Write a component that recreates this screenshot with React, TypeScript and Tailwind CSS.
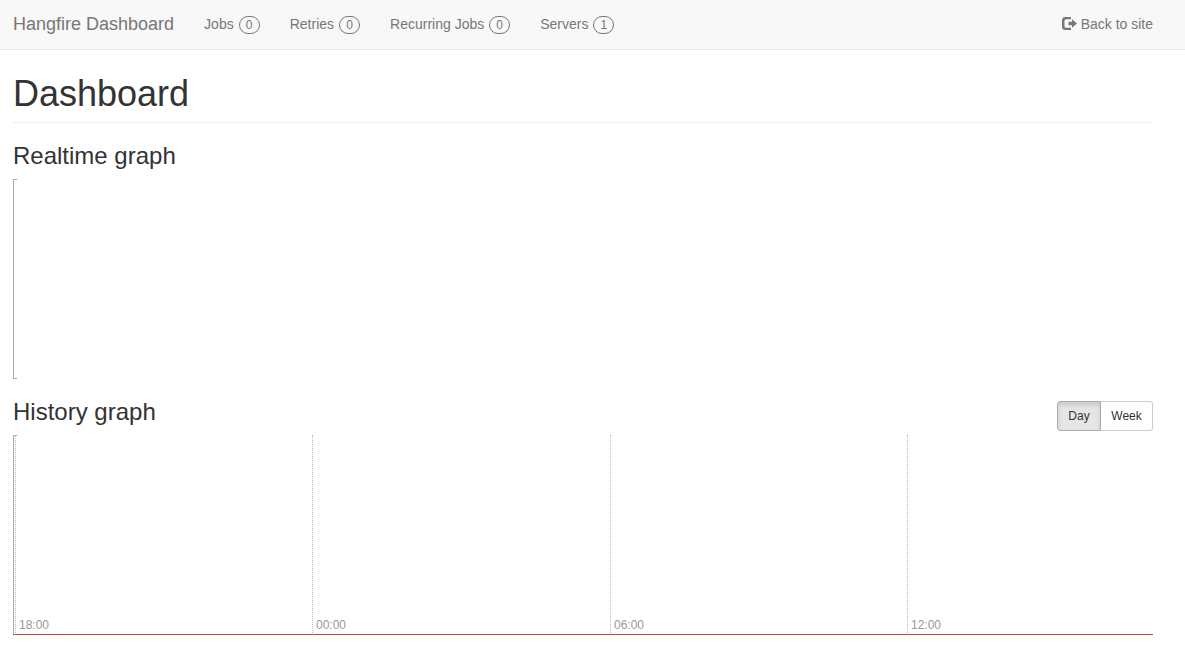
import { useState } from "react";

const navItems = [
  { label: "Jobs", count: 0 },
  { label: "Retries", count: 0 },
  { label: "Recurring Jobs", count: 0 },
  { label: "Servers", count: 1 },
];

const hours = ["18:00", "00:00", "06:00", "12:00"];

const periods = ["Day", "Week"];

function LogOutIcon() {
  return (
    <svg viewBox="0 0 15 14" className="mt-[3px] h-[14px] w-[15px]" fill="currentColor" aria-hidden="true">
      <path d="M9 0H3.500Q0 0 0 3.500v6Q0 13 3.500 13H9v-2.300H4Q2.500 10.700 2.500 9.200V3.800Q2.500 2.300 4 2.300H9z" />
      <path d="M10 2.300 15 6.500 10 10.700V8.200H6.500V4.800H10z" />
    </svg>
  );
}

// y axis line with a short tick at both ends
function Axis() {
  return <div className="h-full w-1 border-y border-l border-[#aaa]" />;
}

function Navbar() {
  return (
    <nav className="flex items-start justify-between border-b border-[#e7e7e7] bg-[#f8f8f8] pt-[14px] pr-8 pb-[15px] pl-[13px] text-[#777]">
      <div className="flex items-start gap-[30px]">
        <a href="#" className="text-lg leading-5">
          Hangfire Dashboard
        </a>
        {navItems.map((item) => (
          <a key={item.label} href="#" className="flex items-start gap-[5px]">
            {item.label}
            <span className="mt-[2px] min-w-[21px] rounded-[10px] border border-[#777] px-[6px] py-[2px] text-center text-xs leading-3">
              {item.count}
            </span>
          </a>
        ))}
      </div>

      <a href="#" className="flex items-start gap-1">
        <LogOutIcon />
        Back to site
      </a>
    </nav>
  );
}

export default function App() {
  const [period, setPeriod] = useState("Day");

  return (
    <div className="bg-white font-['Liberation_Sans',Arial,sans-serif] text-sm leading-5 text-[#333]">
      <Navbar />

      <main className="pt-6 pr-8 pb-7 pl-[13px]">
        <h1 className="border-b border-[#eee] pb-2 text-4xl leading-10">Dashboard</h1>

        <h3 className="mt-5 mb-[10px] text-2xl leading-[26px]">Realtime graph</h3>
        <div className="h-[200px]">
          <Axis />
        </div>

        <div className="mt-5 mb-1 flex items-start justify-between">
          <h3 className="text-2xl leading-[26px]">History graph</h3>
          <div className="mt-[2px] flex text-xs leading-[18px]">
            {periods.map((p) => (
              <button
                key={p}
                type="button"
                aria-pressed={period === p}
                onClick={() => setPeriod(p)}
                className={
                  period === p
                    ? "relative min-w-11 border border-[#adadad] bg-[#e6e6e6] px-[10px] py-[5px] shadow-[inset_0_3px_5px_rgba(0,0,0,0.125)] first:rounded-l-[3px] last:-ml-px last:min-w-[53px] last:rounded-r-[3px]"
                    : "min-w-11 border border-[#ccc] bg-white px-[10px] py-[5px] first:rounded-l-[3px] last:-ml-px last:min-w-[53px] last:rounded-r-[3px]"
                }
              >
                {p}
              </button>
            ))}
          </div>
        </div>

        <div className="grid h-[200px] grid-cols-[2px_297fr_298fr_297fr_246fr]">
          <Axis />
          {hours.map((hour) => (
            <div
              key={hour}
              className="flex items-end border-l border-dotted border-[#bbb] pb-px pl-[3px] text-xs leading-[18px] text-[#999]"
            >
              {hour}
            </div>
          ))}
        </div>
        {/* flat zero series along the bottom of the chart */}
        <div className="relative -mt-px h-px bg-[#c14b40]" />
      </main>
    </div>
  );
}
